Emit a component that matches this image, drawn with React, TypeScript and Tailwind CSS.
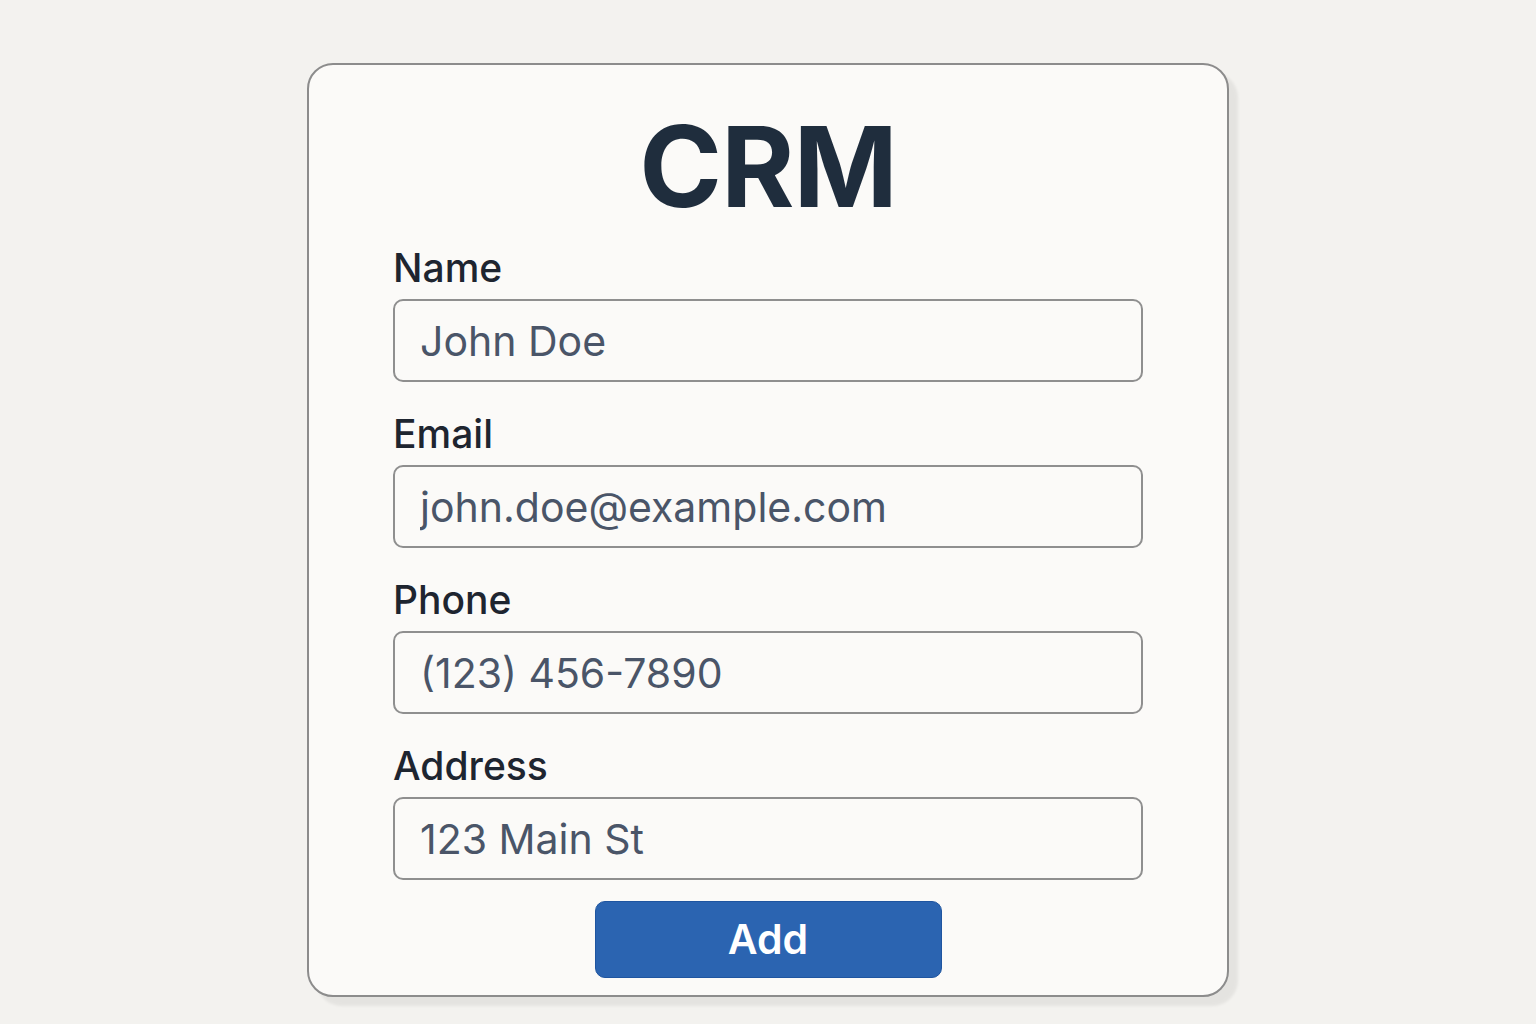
import React from 'react';

const fields = [
  { label: 'Name', value: 'John Doe' },
  { label: 'Email', value: 'john.doe@example.com' },
  { label: 'Phone', value: '(123) 456-7890' },
  { label: 'Address', value: '123 Main St' },
];

export default function App() {
  return (
    <div
      className="min-h-screen w-full bg-[#f3f2ef] pt-[63px]"
      style={{ fontFamily: 'Inter, "Noto Sans", sans-serif' }}
    >
      <div className="mx-auto w-[922px] rounded-[26px] border-2 border-[#8c8c8c] bg-[#fbfaf8] px-[84px] pt-[45px] pb-[17px] shadow-[9px_9px_3px_rgba(0,0,0,0.06)]">
        <h1 className="text-center text-[112px] font-bold leading-none tracking-[-0.01em] text-[#1f2d3d]">
          CRM
        </h1>

        <form className="mt-[24px] flex flex-col gap-[30px]" onSubmit={(e) => e.preventDefault()}>
          {fields.map((f) => (
            <div key={f.label} className="flex flex-col gap-[9px]">
              <label className="h-[44px] text-[39px] font-medium leading-[44px] text-[#1e2530]">
                {f.label}
              </label>
              <input
                type="text"
                defaultValue={f.value}
                className="h-[83px] w-full rounded-[10px] border-2 border-[#8f8f8f] bg-[#fbfaf8] px-[25px] text-[41px] text-[#4a5568] outline-none"
              />
            </div>
          ))}
        </form>

        <div className="mt-[21px] flex justify-center">
          <button
            type="button"
            className="h-[77px] w-[347px] rounded-[10px] border border-[#1f55a0] bg-[#2b64b1] text-[41px] font-semibold text-white"
          >
            Add
          </button>
        </div>
      </div>
    </div>
  );
}
